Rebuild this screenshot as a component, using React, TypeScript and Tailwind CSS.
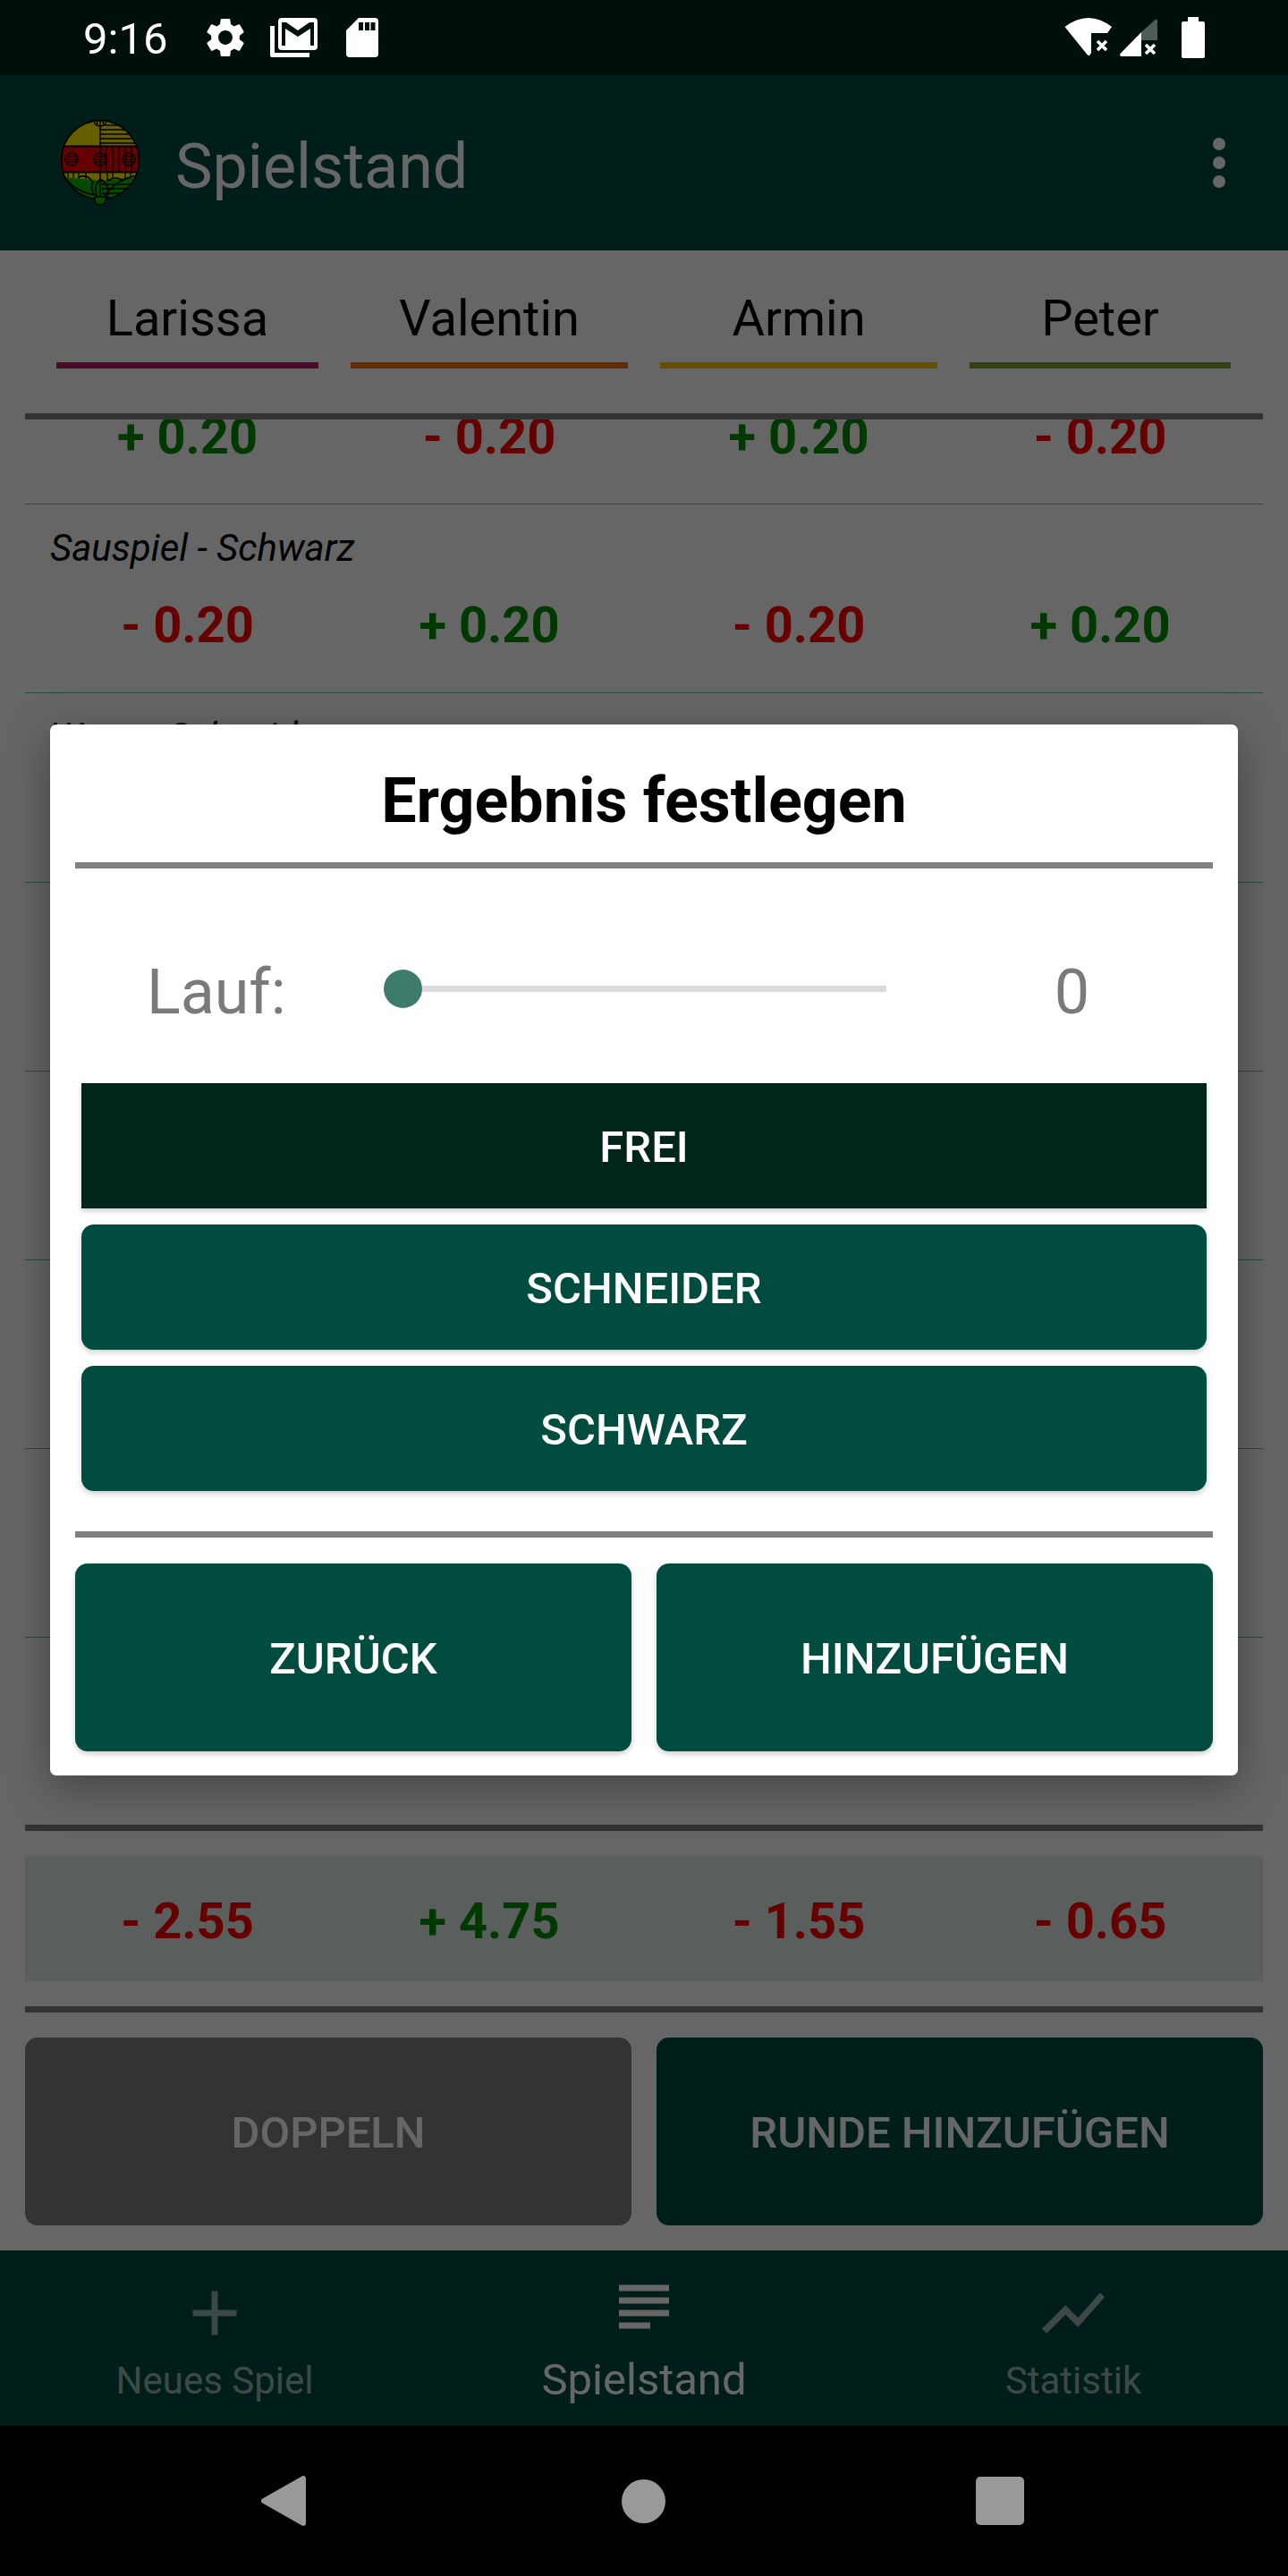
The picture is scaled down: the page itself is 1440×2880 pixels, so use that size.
const rows = [
  { title: '', values: ['+ 0.20', '- 0.20', '+ 0.20', '- 0.20'] },
  { title: 'Sauspiel - Schwarz', values: ['- 0.20', '+ 0.20', '- 0.20', '+ 0.20'] },
  { title: 'Wenz - Schneider', values: [] },
  { title: '', values: [] },
  { title: '', values: [] },
  { title: '', values: [] },
  { title: '', values: [] },
]

const players = [
  { name: 'Larissa', line: 'bg-[#c2185b]' },
  { name: 'Valentin', line: 'bg-[#ff6d00]' },
  { name: 'Armin', line: 'bg-[#ffc800]' },
  { name: 'Peter', line: 'bg-[#80a028]' },
]

const columns = 'grid grid-cols-[293px_310px_310px_292px] gap-x-[36px] pl-[35px]'

function Score({ value }: { value: string }) {
  return (
    <div
      className={`text-center text-[56px] leading-[66px] font-bold ${
        value.startsWith('+') ? 'text-[#008f00]' : 'text-[#ff0000]'
      }`}
    >
      {value}
    </div>
  )
}

function StatusBar() {
  return (
    <div className="flex h-[84px] shrink-0 items-center bg-[#000f0a] pl-[93px] pr-[93px]">
      <span className="w-[93px] pt-[3px] text-[49px] leading-none text-white">9:16</span>
      {/* Settings */}
      <svg viewBox="2.5 2 19 20" className="ml-[44px] h-[44px] w-[44px] fill-white">
        <path d="M19.14 12.94c.04-.3.06-.61.06-.94 0-.32-.02-.64-.07-.94l2.03-1.58c.18-.14.23-.41.12-.61l-1.92-3.32c-.12-.22-.37-.29-.59-.22l-2.39.96c-.5-.38-1.03-.7-1.62-.94l-.36-2.54c-.04-.24-.24-.41-.48-.41h-3.84c-.24 0-.43.17-.47.41l-.36 2.54c-.59.24-1.13.57-1.62.94l-2.39-.96c-.22-.08-.47 0-.59.22L2.74 8.87c-.12.21-.08.47.12.61l2.03 1.58c-.05.3-.09.63-.09.94s.02.64.07.94l-2.03 1.58c-.18.14-.23.41-.12.61l1.92 3.32c.12.22.37.29.59.22l2.39-.96c.5.38 1.03.7 1.62.94l.36 2.54c.05.24.24.41.48.41h3.84c.24 0 .44-.17.47-.41l.36-2.54c.59-.24 1.13-.56 1.62-.94l2.39.96c.22.08.47 0 .59-.22l1.92-3.32c.12-.22.07-.47-.12-.61l-2.01-1.58zM12 15.6c-1.98 0-3.6-1.62-3.6-3.6s1.62-3.6 3.6-3.6 3.6 1.62 3.6 3.6-1.62 3.6-3.6 3.6z" />
      </svg>
      {/* Gmail stack */}
      <svg viewBox="0 0 53 44" className="ml-[28px] h-[44px] w-[53px]">
        <path fill="#fff" d="M0 9h5v30h39v5H2a2 2 0 0 1-2-2z" />
        <rect x="9" y="0" width="44" height="36" rx="4" fill="#fff" />
        <path fill="#000f0a" d="M13 5h5l13 9 13-9h5v26h-4V12L31 21 17 12v19h-4z" />
      </svg>
      {/* SD card */}
      <svg viewBox="0 0 36 44" className="ml-[32px] h-[44px] w-[36px]">
        <path fill="#fff" d="M14 0h18a4 4 0 0 1 4 4v36a4 4 0 0 1-4 4H4a4 4 0 0 1-4-4V14z" />
        <path fill="#000f0a" d="M14 5h5v9h-5zM21 5h5v9h-5zM27.5 5h5v9h-5z" />
      </svg>
      <div className="flex-1" />
      {/* Wifi */}
      <svg viewBox="0 0 53 44" className="h-[44px] w-[53px]">
        <path fill="#fff" d="M0.5 10Q27-10 53 10L48 17H30V39L28.5 41.5Q27 43 25.5 41Z" />
        <path stroke="#fff" strokeWidth="3.5" d="M37 26l10 10M47 26l-10 10" />
      </svg>
      {/* Signal */}
      <svg viewBox="0 0 42 42" className="ml-[9px] h-[42px] w-[42px]">
        <path fill="#4d5c57" d="M24 15L40 0.5Q42 0 42 2V24H24z" />
        <path fill="#fff" d="M0.5 39L24 15V42H2Q-0.5 42 0.5 39z" />
        <path stroke="#fff" strokeWidth="3.5" d="M29 29l10 10M39 29l-10 10" />
      </svg>
      {/* Battery */}
      <svg viewBox="0 0 26 46" className="ml-[27px] h-[46px] w-[26px]">
        <path fill="#fff" d="M7 0h12v5h5a2 2 0 0 1 2 2v37a2 2 0 0 1-2 2H2a2 2 0 0 1-2-2V7a2 2 0 0 1 2-2h5z" />
      </svg>
    </div>
  )
}

function Logo() {
  return (
    <svg viewBox="0 0 88 96" className="h-[96px] w-[88px]">
      <defs>
        <clipPath id="logo-clip">
          <ellipse cx="44" cy="45" rx="43.5" ry="44" />
        </clipPath>
      </defs>
      <g clipPath="url(#logo-clip)">
        <rect width="88" height="30" fill="#ffee00" />
        <rect y="30" width="88" height="28" fill="#ff0000" />
        <rect y="58" width="88" height="12" fill="#ffee00" />
        <path fill="#00bb00" d="M0 64Q24 66 44 68Q66 66 88 64V92H0z" />
        {/* stripes on the right half only */}
        <path
          stroke="#000"
          strokeWidth="1.3"
          d="M44 6H88M44 11H88M44 16H88M44 21H88M44 26H88M51 30V58M58 30V58M65 30V58M72 30V58M79 30V58M8 58V65M14 58V65M20 58V66M28 58V66M52 58V68M58 58V66M72 58V66M78 58V65M46 72H82M46 77H76M46 82H66M46 87H54"
        />
        <path stroke="#000" strokeWidth="2.2" d="M0 29.5H88M0 58.5H88" />
        <path
          stroke="#000"
          strokeWidth="1.6"
          fill="none"
          d="M44 0V92M3 62Q16 82 40 84M20 64Q30 60 36 70Q32 78 38 84M44 66Q34 76 44 92M44 66Q58 74 50 90M48 86Q62 66 86 62M52 68Q62 62 70 68"
        />
      </g>
      <ellipse cx="44" cy="45" rx="43.5" ry="44" fill="none" stroke="#000" strokeWidth="1.6" />
      <path fill="#00bb00" stroke="#000" strokeWidth="1.6" d="M38 86h12v4q0 5-6 5t-6-5z" />
      <path fill="#ffee00" stroke="#000" strokeWidth="1.4" d="M37 1h14q-1 6-7 6t-7-6zM44 1v6M40.5 1v5M47.5 1v5" />
      {[12, 44, 76].map((cx) => (
        <g key={cx} stroke="#000" fill="none">
          <circle cx={cx} cy="44" r="7" strokeWidth="1.6" />
          <path strokeWidth="1.1" d={`M${cx - 6} 41H${cx + 6}M${cx - 7} 44H${cx + 7}M${cx - 6} 47H${cx + 6}`} />
        </g>
      ))}
    </svg>
  )
}

function AppBar() {
  return (
    <div className="flex h-[196px] shrink-0 items-center bg-[#004d40] pl-[68px] pr-[70px]">
      <Logo />
      <span className="ml-[40px] pt-[7px] text-[70px] leading-none text-white">Spielstand</span>
      <div className="flex-1" />
      <div className="flex flex-col gap-[7px]">
        <div className="h-[14px] w-[14px] rounded-full bg-white" />
        <div className="h-[14px] w-[14px] rounded-full bg-white" />
        <div className="h-[14px] w-[14px] rounded-full bg-white" />
      </div>
    </div>
  )
}

function NavItem({ label, path, active }: { label: string; path: string; active?: boolean }) {
  return (
    <div className={`flex flex-col items-center ${active ? 'pt-[21px] text-white' : 'pt-[28px] text-white/60'}`}>
      <svg viewBox="0 0 24 24" className="h-[84px] w-[84px] fill-current">
        <path d={path} />
      </svg>
      <span className={active ? 'mt-[11px] text-[49px] leading-[58px]' : 'mt-[9px] text-[42px] leading-[50px]'}>
        {label}
      </span>
    </div>
  )
}

function BottomNav() {
  return (
    <div className="grid h-[196px] shrink-0 grid-cols-3 bg-[#004d40]">
      <NavItem label="Neues Spiel" path="M19 13h-6v6h-2v-6H5v-2h6V5h2v6h6v2z" />
      <NavItem label="Spielstand" path="M14 17H4v2h10v-2zm6-8H4v2h16V9zM4 15h16v-2H4v2zM4 5v2h16V5H4z" active />
      <NavItem label="Statistik" path="M3.5 18.49l6-6.01 4 4L22 6.92l-1.41-1.41-7.09 7.97-4-4L2 16.99z" />
    </div>
  )
}

function DialogOption({ label, selected }: { label: string; selected?: boolean }) {
  return (
    <div
      className={`flex h-[140px] items-center justify-center pt-[4px] text-[49px] font-medium text-white shadow-[0_3px_6px_rgba(0,0,0,0.2)] ${
        selected ? 'bg-[#00251a]' : 'rounded-[14px] bg-[#004d40]'
      }`}
    >
      {label}
    </div>
  )
}

function ResultDialog() {
  return (
    <div className="absolute left-[56px] top-[726px] flex h-[1175px] w-[1328px] flex-col rounded-[7px] bg-white px-[28px] shadow-[0_14px_50px_rgba(0,0,0,0.35)]">
      <div className="flex h-[154px] items-center justify-center pt-[16px] text-[70px] font-bold leading-none text-black">
        Ergebnis festlegen
      </div>
      <div className="h-[7px] bg-[#808080]" />
      <div className="flex h-[240px] items-center pl-[80px] pt-[28px] text-[#7a7a7a]">
        <span className="w-[265px] pt-[8px] text-[70px] leading-none">Lauf:</span>
        <div className="flex w-[562px] items-center">
          <div className="h-[43px] w-[43px] shrink-0 rounded-full bg-[#3d7c6b]" />
          <div className="h-[7px] flex-1 bg-[#dbdbdb]" />
        </div>
        <span className="flex-1 pl-[50px] pt-[8px] text-center text-[70px] leading-none">0</span>
      </div>
      <div className="flex flex-col gap-[18px] px-[7px]">
        <DialogOption label="FREI" selected />
        <DialogOption label="SCHNEIDER" />
        <DialogOption label="SCHWARZ" />
      </div>
      <div className="mt-[45px] h-[7px] bg-[#808080]" />
      <div className="mt-[29px] grid grid-cols-2 gap-[28px]">
        <div className="flex h-[210px] items-center justify-center rounded-[14px] bg-[#004d40] pt-[4px] text-[49px] font-medium text-white shadow-[0_3px_6px_rgba(0,0,0,0.2)]">
          ZURÜCK
        </div>
        <div className="flex h-[210px] items-center justify-center rounded-[14px] bg-[#004d40] pt-[4px] text-[49px] font-medium text-white shadow-[0_3px_6px_rgba(0,0,0,0.2)]">
          HINZUFÜGEN
        </div>
      </div>
    </div>
  )
}

export default function App() {
  return (
    <div className="flex h-[2880px] w-[1440px] flex-col overflow-hidden bg-black font-[Roboto,sans-serif]">
      <StatusBar />

      <div className="relative flex min-h-0 flex-1 flex-col bg-white">
        <AppBar />

        <div className="flex min-h-0 flex-1 flex-col px-[28px]">
          {/* Player names */}
          <div className={`${columns} h-[182px] shrink-0 pt-[43px]`}>
            {players.map((player) => (
              <div key={player.name} className="flex flex-col">
                <div className="text-center text-[56px] leading-[66px] text-black">{player.name}</div>
                <div className={`mt-[16px] h-[7px] ${player.line}`} />
              </div>
            ))}
          </div>
          <div className="h-[7px] shrink-0 bg-[#808080]" />

          {/* Rounds */}
          <div className="min-h-0 flex-1 overflow-hidden">
            <div className="-mt-[116px]">
              {rows.map((row, i) => (
                <div key={i} className="h-[211.2px] border-b border-[#69b9a0] pt-[24px]">
                  <div className="h-[50px] pl-[28px] text-[42px] italic leading-[50px] text-black">{row.title}</div>
                  <div className={`${columns} mt-[28px]`}>
                    {row.values.map((value, j) => (
                      <Score key={j} value={value} />
                    ))}
                  </div>
                </div>
              ))}
            </div>
          </div>

          {/* Totals */}
          <div className="h-[7px] shrink-0 bg-[#808080]" />
          <div className={`${columns} mt-[28px] h-[140px] shrink-0 items-center bg-[#e1ebe6] pt-[6px]`}>
            <Score value="- 2.55" />
            <Score value="+ 4.75" />
            <Score value="- 1.55" />
            <Score value="- 0.65" />
          </div>
          <div className="mt-[28px] h-[7px] shrink-0 bg-[#808080]" />

          <div className="mb-[28px] mt-[28px] grid h-[210px] shrink-0 grid-cols-2 gap-[28px]">
            <div className="flex items-center justify-center rounded-[14px] bg-[#808080] pt-[4px] text-[49px] font-medium text-white">
              DOPPELN
            </div>
            <div className="flex items-center justify-center rounded-[14px] bg-[#004d40] pt-[4px] text-[49px] font-medium text-white">
              RUNDE HINZUFÜGEN
            </div>
          </div>
        </div>

        <BottomNav />

        <div className="absolute inset-0 bg-black/60" />
        <ResultDialog />
      </div>

      {/* Android navigation bar */}
      <div className="flex h-[168px] shrink-0 items-center bg-black pl-[292px]">
        <svg viewBox="0 0 50 56" className="h-[56px] w-[50px] fill-[#999999] stroke-[#999999]">
          <path strokeWidth="6" strokeLinejoin="round" d="M3 28L47 3V53Z" />
        </svg>
        <div className="ml-[353px] h-[49px] w-[49px] rounded-full bg-[#999999]" />
        <div className="ml-[347px] h-[54px] w-[54px] rounded-[5px] bg-[#999999]" />
      </div>
    </div>
  )
}
